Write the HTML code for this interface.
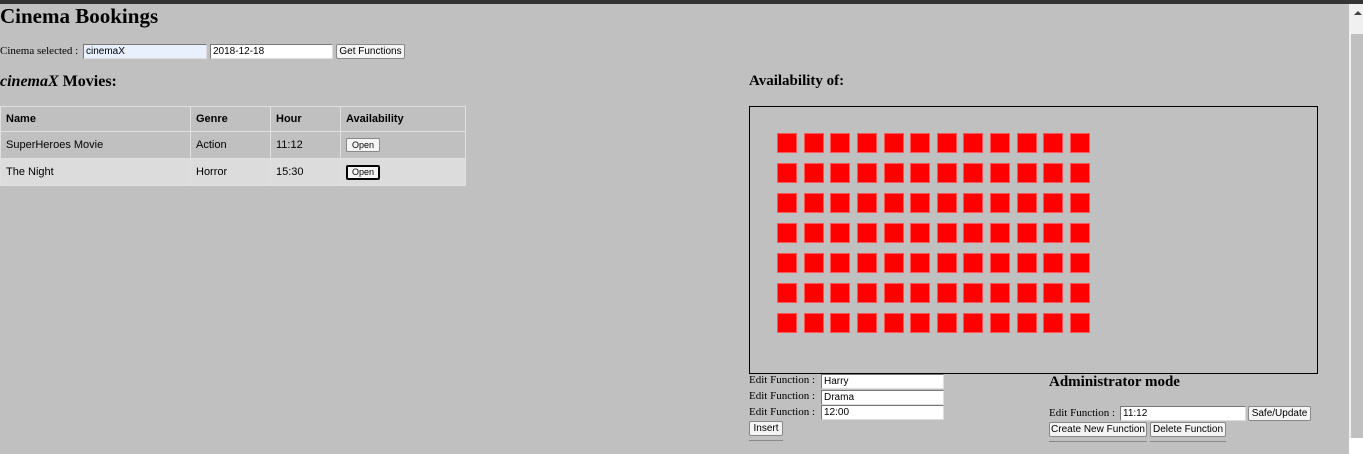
<!DOCTYPE html>
<html><head><style>
*{box-sizing:border-box}
body{margin:0;width:1363px;height:454px;overflow:hidden;background:#c0c0c0;position:relative;font-family:"Liberation Serif",serif;color:#000}
.a{position:absolute;white-space:nowrap}
.in{position:absolute;height:15px;border:1px solid #777;border-right-color:#ddd;border-bottom-color:#ddd;background:#fff;font:10px "Liberation Sans",sans-serif;padding:1px 2px;line-height:11px}
.bt{position:absolute;height:15px;border:1px solid #888;border-radius:2px;background:#f4f4f4;font:10px "Liberation Sans",sans-serif;text-align:center;line-height:13px}
.lab{font-size:11px}
table{position:absolute;left:0;top:106px;width:466px;border-collapse:collapse;font:11px "Liberation Sans",sans-serif}
td,th{border:1px solid #e0e0e0;text-align:left;padding:0 5px}
th{height:25px}
td{height:27px}
.seats{position:absolute;left:777px;top:133px;display:grid;grid-template-columns:repeat(12,20px);column-gap:6.63px;row-gap:10px}
.seats div{width:20px;height:20px;background:#f00;border:1px solid #f55}
</style></head><body>
<div class="a" style="left:0;top:0;width:1363px;height:4px;background:#333"></div>
<div class="a" style="left:0;top:4px;font-size:21px;font-weight:bold">Cinema Bookings</div>
<div class="a lab" style="left:0;top:45px">Cinema selected :</div>
<div class="in" style="left:83px;top:44px;width:124px;background:#e8f0fe">cinemaX</div>
<div class="in" style="left:210px;top:44px;width:123px">2018-12-18</div>
<div class="bt" style="left:336px;top:44px;width:69px">Get Functions</div>
<div class="a" style="left:0;top:73px;font-size:16px;font-weight:bold"><i>cinemaX</i> Movies:</div>
<table>
<tr><th style="width:190px">Name</th><th style="width:80px">Genre</th><th style="width:70px">Hour</th><th>Availability</th></tr>
<tr><td>SuperHeroes Movie</td><td>Action</td><td>11:12</td><td><span style="display:inline-block;border:1px solid #888;border-radius:2px;background:#f4f4f4;font-size:9px;padding:0 5px;line-height:12px">Open</span></td></tr>
<tr style="background:#dcdcdc"><td>The Night</td><td>Horror</td><td>15:30</td><td><span style="display:inline-block;border:2px solid #000;border-radius:2px;background:#f4f4f4;font-size:9px;padding:0 4px;line-height:11px">Open</span></td></tr>
</table>
<div class="a" style="left:749px;top:73px;font-size:15px;font-weight:bold">Availability of:</div>
<div class="a" style="left:749px;top:106px;width:569px;height:268px;border:1px solid #000"></div>
<div class="seats">
<div></div><div></div><div></div><div></div><div></div><div></div><div></div><div></div><div></div><div></div><div></div><div></div>
<div></div><div></div><div></div><div></div><div></div><div></div><div></div><div></div><div></div><div></div><div></div><div></div>
<div></div><div></div><div></div><div></div><div></div><div></div><div></div><div></div><div></div><div></div><div></div><div></div>
<div></div><div></div><div></div><div></div><div></div><div></div><div></div><div></div><div></div><div></div><div></div><div></div>
<div></div><div></div><div></div><div></div><div></div><div></div><div></div><div></div><div></div><div></div><div></div><div></div>
<div></div><div></div><div></div><div></div><div></div><div></div><div></div><div></div><div></div><div></div><div></div><div></div>
<div></div><div></div><div></div><div></div><div></div><div></div><div></div><div></div><div></div><div></div><div></div><div></div>
</div>
<div class="a lab" style="left:749px;top:374px">Edit Function :</div>
<div class="in" style="left:821px;top:374px;width:123px">Harry</div>
<div class="a lab" style="left:749px;top:390px">Edit Function :</div>
<div class="in" style="left:821px;top:390px;width:123px">Drama</div>
<div class="a lab" style="left:749px;top:406px">Edit Function :</div>
<div class="in" style="left:821px;top:405px;width:123px">12:00</div>
<div class="bt" style="left:749px;top:421px;width:34px">Insert</div>
<div class="a" style="left:749px;top:440px;width:34px;height:2px;border-top:1px solid #888"></div>
<div class="a" style="left:1049px;top:374px;font-size:15px;font-weight:bold">Administrator mode</div>
<div class="a lab" style="left:1049px;top:407px">Edit Function :</div>
<div class="in" style="left:1120px;top:406px;width:126px">11:12</div>
<div class="bt" style="left:1248px;top:406px;width:63px">Safe/Update</div>
<div class="bt" style="left:1049px;top:422px;width:98px">Create New Function</div>
<div class="bt" style="left:1150px;top:422px;width:76px">Delete Function</div>
<div class="a" style="left:1049px;top:441px;width:98px;border-top:1px solid #888"></div>
<div class="a" style="left:1150px;top:441px;width:76px;border-top:1px solid #888"></div>
<div class="a" style="left:1349px;top:4px;width:14px;height:450px;background:#f0f0f0"></div>
<div class="a" style="left:1351px;top:34px;width:12px;height:404px;background:#c0c0c0"></div>
<div class="a" style="left:1354px;top:11px;width:0;height:0;border-left:4px solid transparent;border-right:4px solid transparent;border-bottom:4px solid #444"></div>
<div class="a" style="left:1349px;top:438px;width:14px;height:16px;background:#fff"></div>
</body></html>
